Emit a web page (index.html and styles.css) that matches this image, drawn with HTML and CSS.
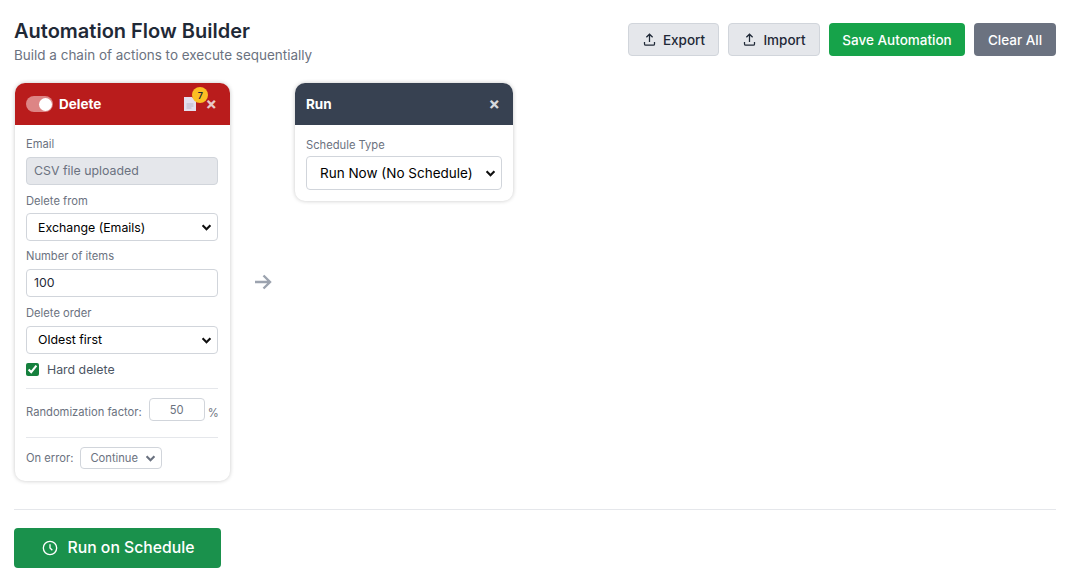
FILE: index.html
```html
<!DOCTYPE html>
<html>
<head>
  <meta charset="utf-8">
  <title>Automation Flow Builder</title>
  <link rel="stylesheet" href="styles.css">
</head>
<body>
  <div class="page">
    <div class="top">
      <div>
        <h1>Automation Flow Builder</h1>
        <p class="sub">Build a chain of actions to execute sequentially</p>
      </div>
      <div class="actions">
        <button class="btn btn-light">
          <svg class="ico" viewBox="0 0 24 24"><path d="M4 16v3a2 2 0 0 0 2 2h12a2 2 0 0 0 2-2v-3M12 16V4M7 8.5 12 3.5l5 5"/></svg>
          Export
        </button>
        <button class="btn btn-light btn-import">
          <svg class="ico" viewBox="0 0 24 24"><path d="M4 16v3a2 2 0 0 0 2 2h12a2 2 0 0 0 2-2v-3M12 16V4M7 8.5 12 3.5l5 5"/></svg>
          Import
        </button>
        <button class="btn btn-green">Save Automation</button>
        <button class="btn btn-gray">Clear All</button>
      </div>
    </div>

    <div class="flow">
      <div class="card card-delete">
        <div class="card-head head-red">
          <span class="toggle"><span class="knob"></span></span>
          <span class="card-title">Delete</span>
          <span class="head-icons">
            <span class="doc">
              <svg viewBox="0 0 12 14" width="12" height="14"><path class="doc-page" d="M0 0h8l4 4v10H0z"/><path class="doc-lines" d="M2.5 7h7M2.5 9h7M2.5 11h5"/></svg>
              <span class="badge">7</span>
            </span>
            <span class="close">&times;</span>
          </span>
        </div>
        <div class="card-body">
          <label class="lbl">Email</label>
          <input class="field field-off" type="text" value="CSV file uploaded" disabled>
          <label class="lbl">Delete from</label>
          <select class="field sel"><option>Exchange (Emails)</option></select>
          <label class="lbl">Number of items</label>
          <input class="field num" type="text" value="100">
          <label class="lbl">Delete order</label>
          <select class="field sel sel-order"><option>Oldest first</option></select>
          <label class="check"><input type="checkbox" checked> Hard delete</label>
          <div class="row row-rand">
            <span class="row-lbl">Randomization factor:</span>
            <input class="small-input" type="text" value="50">
            <span class="row-lbl pct">%</span>
          </div>
          <div class="row row-err">
            <span class="row-lbl">On error:</span>
            <select class="small-sel"><option>Continue</option></select>
          </div>
        </div>
      </div>

      <div class="link">
        <svg viewBox="0 0 18 16" width="18" height="16"><path d="M1 8h15M9.5 1.5 16 8l-6.5 6.5"/></svg>
      </div>

      <div class="card card-run">
        <div class="card-head head-dark">
          <span class="card-title title-run">Run</span>
          <span class="head-icons"><span class="close">&times;</span></span>
        </div>
        <div class="card-body">
          <label class="lbl">Schedule Type</label>
          <select class="field sel run-sel"><option>Run Now (No Schedule)</option></select>
        </div>
      </div>
    </div>

    <div class="foot">
      <button class="run-btn">
        <svg viewBox="0 0 24 24" width="16" height="16"><circle cx="12" cy="12" r="10"/><path d="M12 6.5V12l3.5 3.5"/></svg>
        Run on Schedule
      </button>
    </div>
  </div>
</body>
</html>
```
FILE: styles.css
```css
* {
  box-sizing: border-box;
  margin: 0;
  padding: 0;
}
body {
  font-family: Inter, "Liberation Sans", sans-serif;
  background: #fff;
  color: #1f2937;
}
.page {
  padding: 18px 12px 19px 14px;
}
.top {
  display: flex;
  justify-content: space-between;
  align-items: flex-start;
  height: 65px;
}
h1 {
  font-size: 20px;
  line-height: 26px;
  font-weight: 600;
  color: #1f2937;
}
.sub {
  font-size: 13.47px;
  line-height: 22px;
  color: #6b7280;
}
.actions {
  display: flex;
  gap: 9px;
  padding-top: 5px;
}
.btn {
  height: 33px;
  border-radius: 4px;
  font-family: inherit;
  font-size: 13.5px;
  font-weight: 500;
  display: flex;
  align-items: center;
  justify-content: center;
  gap: 6px;
  border: 1px solid transparent;
}
.btn-light {
  width: 91px;
  background: #e5e7eb;
  border-color: #d1d5db;
  color: #1f2937;
}
.btn-import {
  width: 92px;
}
.btn-green {
  width: 136px;
  background: #16a34a;
  color: #fff;
}
.btn-gray {
  width: 82px;
  background: #6b7280;
  color: #fff;
}
.ico {
  width: 15px;
  height: 15px;
  fill: none;
  stroke: #1f2937;
  stroke-width: 2;
}
.flow {
  display: flex;
  align-items: flex-start;
  padding-left: 1px;
}
.card {
  background: #fff;
  border-radius: 10px;
  box-shadow: 0 0 4px rgba(0, 0, 0, 0.22);
  overflow: hidden;
}
.card-delete {
  width: 215px;
  height: 398px;
}
.card-run {
  width: 218px;
  height: 118px;
}
.card-head {
  height: 42px;
  display: flex;
  align-items: center;
  padding: 0 13px 0 11px;
  color: #fff;
}
.head-red {
  background: #b91c1c;
}
.head-dark {
  background: #374151;
}
.toggle {
  width: 27px;
  height: 16px;
  border-radius: 8px;
  background: #dd8585;
  margin-right: 6px;
  display: flex;
  justify-content: flex-end;
  align-items: center;
  padding-right: 1px;
}
.knob {
  width: 13px;
  height: 13px;
  border-radius: 50%;
  background: #fff;
}
.card-title {
  font-size: 13.5px;
  font-weight: 700;
}
.head-icons {
  margin-left: auto;
  display: flex;
  align-items: center;
  gap: 9px;
}
.doc {
  position: relative;
  display: flex;
}
.doc-page {
  fill: #e3dfee;
}
.doc-lines {
  fill: none;
  stroke: #b9b5c6;
  stroke-width: 1;
}
.badge {
  position: absolute;
  top: -10px;
  left: 8px;
  width: 16px;
  height: 16px;
  border-radius: 50%;
  background: #fbbf24;
  color: #1f2937;
  font-size: 9px;
  font-weight: 600;
  display: flex;
  align-items: center;
  justify-content: center;
}
.close {
  font-size: 17px;
  font-weight: 700;
  line-height: 14px;
  color: #e7c8c8;
}
.head-dark .close {
  color: #d6d9de;
}
.card-body {
  padding: 11px 12px 0 11px;
}
.card-run .card-body {
  padding: 12px 11px 0;
}
.lbl {
  display: block;
  font-size: 11.2px;
  line-height: 17px;
  color: #6b7280;
}
.field {
  display: block;
  width: 100%;
  height: 28px;
  margin: 4px 0 8px;
  border: 1px solid #d1d5db;
  border-radius: 4px;
  background: #fff;
  font-family: inherit;
  font-size: 12.35px;
  color: #000;
  padding: 0 7px;
  outline: none;
}
.sel {
  appearance: none;
  background-image: url("data:image/svg+xml,%3Csvg xmlns='http://www.w3.org/2000/svg' viewBox='0 0 12 8'%3E%3Cpath d='M1.500 1.500 6 6l4.500-4.500' fill='none' stroke='%23111' stroke-width='2.500'/%3E%3C/svg%3E");
  background-repeat: no-repeat;
  background-position: right 5px center;
  background-size: 11px 7px;
  padding-left: 11px;
  margin: 3px 0 7px;
}
.sel-order {
  margin-top: 4px;
  padding-bottom: 1px;
}
.field-off {
  background: #e5e7eb;
  color: #6b7280;
  padding-bottom: 1px;
}
.num {
  color: #1f2937;
  padding-bottom: 1px;
}
.check {
  display: flex;
  align-items: center;
  gap: 8px;
  height: 16px;
  font-size: 12.35px;
  color: #4b5563;
}
.check input {
  width: 13px;
  height: 13px;
  accent-color: #15803d;
}
.row {
  display: flex;
  border-top: 1px solid #e5e7eb;
}
.row-rand {
  align-items: flex-start;
  margin-top: 11px;
  padding: 9px 0 16px;
}
.row-rand .row-lbl {
  margin-top: 7px;
}
.row-err {
  align-items: center;
  padding-top: 9px;
}
.row-lbl {
  flex: none;
  white-space: nowrap;
  font-size: 11.2px;
  color: #6b7280;
}
.row-rand .pct {
  margin-left: 3px;
  margin-top: 8px;
}
.small-input {
  flex: none;
  width: 56px;
  height: 23px;
  margin-left: 7px;
  border: 1px solid #d1d5db;
  border-radius: 4px;
  font-family: inherit;
  font-size: 11.2px;
  color: #6b7280;
  text-align: center;
  outline: none;
}
.small-sel {
  appearance: none;
  width: 82px;
  height: 22px;
  margin-left: 7px;
  border: 1px solid #d1d5db;
  border-radius: 4px;
  background: #fff url("data:image/svg+xml,%3Csvg xmlns='http://www.w3.org/2000/svg' viewBox='0 0 12 8'%3E%3Cpath d='M1.500 1.500 6 6l4.500-4.500' fill='none' stroke='%236b7280' stroke-width='2.500'/%3E%3C/svg%3E") no-repeat right 5px center / 11px 7px;
  font-family: inherit;
  font-size: 11.2px;
  color: #6b7280;
  padding-left: 9px;
}
.link {
  width: 65px;
  height: 398px;
  display: flex;
  align-items: center;
  justify-content: center;
}
.link path {
  fill: none;
  stroke: #9ca3af;
  stroke-width: 2.4;
}
.run-sel {
  height: 34px;
  margin-top: 2px;
  font-size: 13.5px;
  padding-left: 13px;
}
.foot {
  margin-top: 28px;
  padding-top: 18px;
  border-top: 1px solid #e5e7eb;
}
.run-btn {
  width: 207px;
  height: 40px;
  padding: 0 0 1px 1px;
  background: #1a914c;
  color: #fff;
  border: none;
  border-radius: 4px;
  font-family: inherit;
  font-size: 15.75px;
  font-weight: 500;
  display: flex;
  align-items: center;
  justify-content: center;
  gap: 10px;
}
.run-btn svg {
  fill: none;
  stroke: #fff;
  stroke-width: 2;
}
```
